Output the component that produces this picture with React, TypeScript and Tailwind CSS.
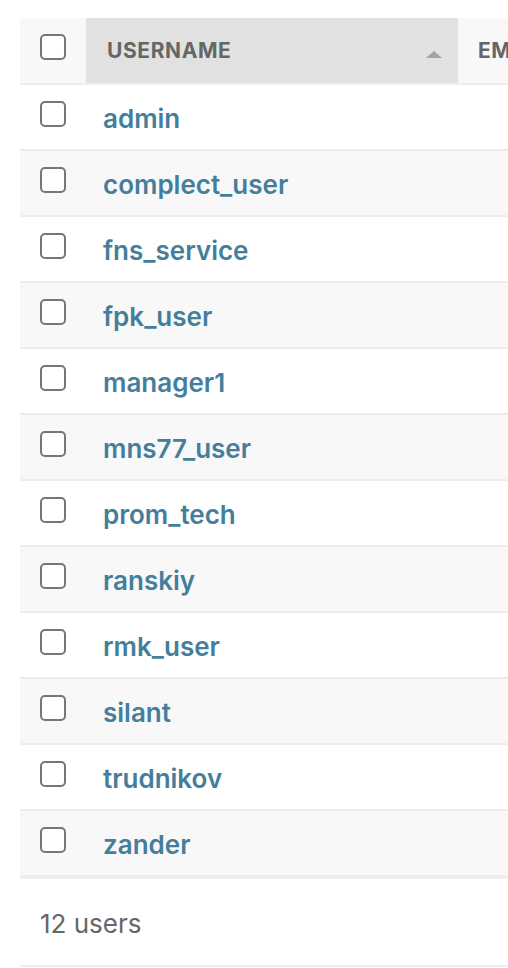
import React from 'react';

const users = [
  'admin',
  'complect_user',
  'fns_service',
  'fpk_user',
  'manager1',
  'mns77_user',
  'prom_tech',
  'ranskiy',
  'rmk_user',
  'silant',
  'trudnikov',
  'zander',
];

const Checkbox = () => (
  <span className="block w-[26px] h-[26px] rounded-[5px] border-2 border-[#767676] bg-white" />
);

export default function App() {
  return (
    <div className="min-h-[968px] bg-white overflow-hidden pt-[18px] pl-[20px] font-['Inter','Liberation_Sans',sans-serif]">
      <div className="w-[600px]">
        {/* header */}
        <div className="flex h-[67px] border-b-2 border-[#eeeeee]">
          <div className="w-[66px] shrink-0 bg-[#f8f8f8] pl-[20px] pt-[16px]">
            <Checkbox />
          </div>
          <div className="w-[372px] shrink-0 bg-[#e1e1e1] flex items-center pl-[21px] pr-[16px]">
            <span className="text-[21px] font-bold tracking-[0.6px] text-[#666666] uppercase">Username</span>
            <span className="ml-auto mt-[8px] w-0 h-0 border-l-[8px] border-r-[8px] border-b-[7px] border-l-transparent border-r-transparent border-b-[#a3a3a3]" />
          </div>
          <div className="flex-1 bg-[#f8f8f8] flex items-center pl-[20px] whitespace-nowrap">
            <span className="text-[21px] font-bold tracking-[0.6px] text-[#666666] uppercase">Email address</span>
          </div>
        </div>

        {/* rows */}
        {users.map((u, i) => (
          <div
            key={u}
            className={`flex h-[66px] border-b-2 border-[#eeeeee] ${i % 2 === 1 ? 'bg-[#f8f8f8]' : 'bg-white'}`}
          >
            <div className="w-[66px] shrink-0 pl-[20px] pt-[16px]">
              <Checkbox />
            </div>
            <div className="flex-1 pl-[17px] pt-[16px]">
              <a className="text-[26px] leading-[36px] font-semibold text-[#447e9b]">{u}</a>
            </div>
          </div>
        ))}

        {/* paginator */}
        <div className="h-[90px] border-t-2 border-b-2 border-[#eeeeee] pl-[20px] pt-[2px] flex items-center">
          <span className="text-[26px] text-[#666666]">12 users</span>
        </div>
      </div>
    </div>
  );
}
